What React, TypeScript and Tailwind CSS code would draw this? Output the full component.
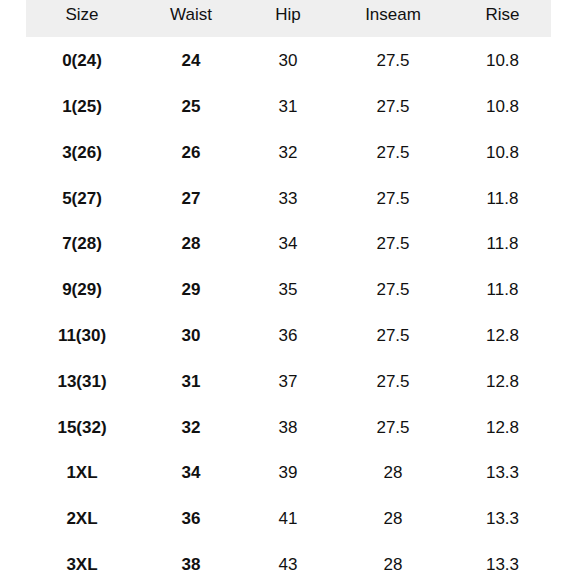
const rows = [
  ['0(24)', '24', '30', '27.5', '10.8'],
  ['1(25)', '25', '31', '27.5', '10.8'],
  ['3(26)', '26', '32', '27.5', '10.8'],
  ['5(27)', '27', '33', '27.5', '11.8'],
  ['7(28)', '28', '34', '27.5', '11.8'],
  ['9(29)', '29', '35', '27.5', '11.8'],
  ['11(30)', '30', '36', '27.5', '12.8'],
  ['13(31)', '31', '37', '27.5', '12.8'],
  ['15(32)', '32', '38', '27.5', '12.8'],
  ['1XL', '34', '39', '28', '13.3'],
  ['2XL', '36', '41', '28', '13.3'],
  ['3XL', '38', '43', '28', '13.3'],
]

const headers = ['Size', 'Waist', 'Hip', 'Inseam', 'Rise']

const cols = 'grid grid-cols-[112px_106px_88px_122px_97px]'

export default function App() {
  return (
    <div className="w-[580px] h-[580px] bg-white overflow-hidden font-['Liberation_Sans',Arial,sans-serif] text-[17px] text-[#111]">
      <div className="ml-[26px] w-[525px]">
        {/* Header */}
        <div className={`${cols} h-[37px] bg-[#efefef] items-center pb-[7px]`}>
          {headers.map(h => (
            <div key={h} className="text-center">{h}</div>
          ))}
        </div>

        {/* Rows */}
        <div className="mt-[1px]">
          {rows.map(row => (
            <div key={row[0]} className={`${cols} h-[45.8px] items-center`}>
              {row.map((cell, i) => (
                <div key={i} className={`text-center ${i < 2 ? 'font-bold' : ''}`}>
                  {cell}
                </div>
              ))}
            </div>
          ))}
        </div>
      </div>
    </div>
  )
}
